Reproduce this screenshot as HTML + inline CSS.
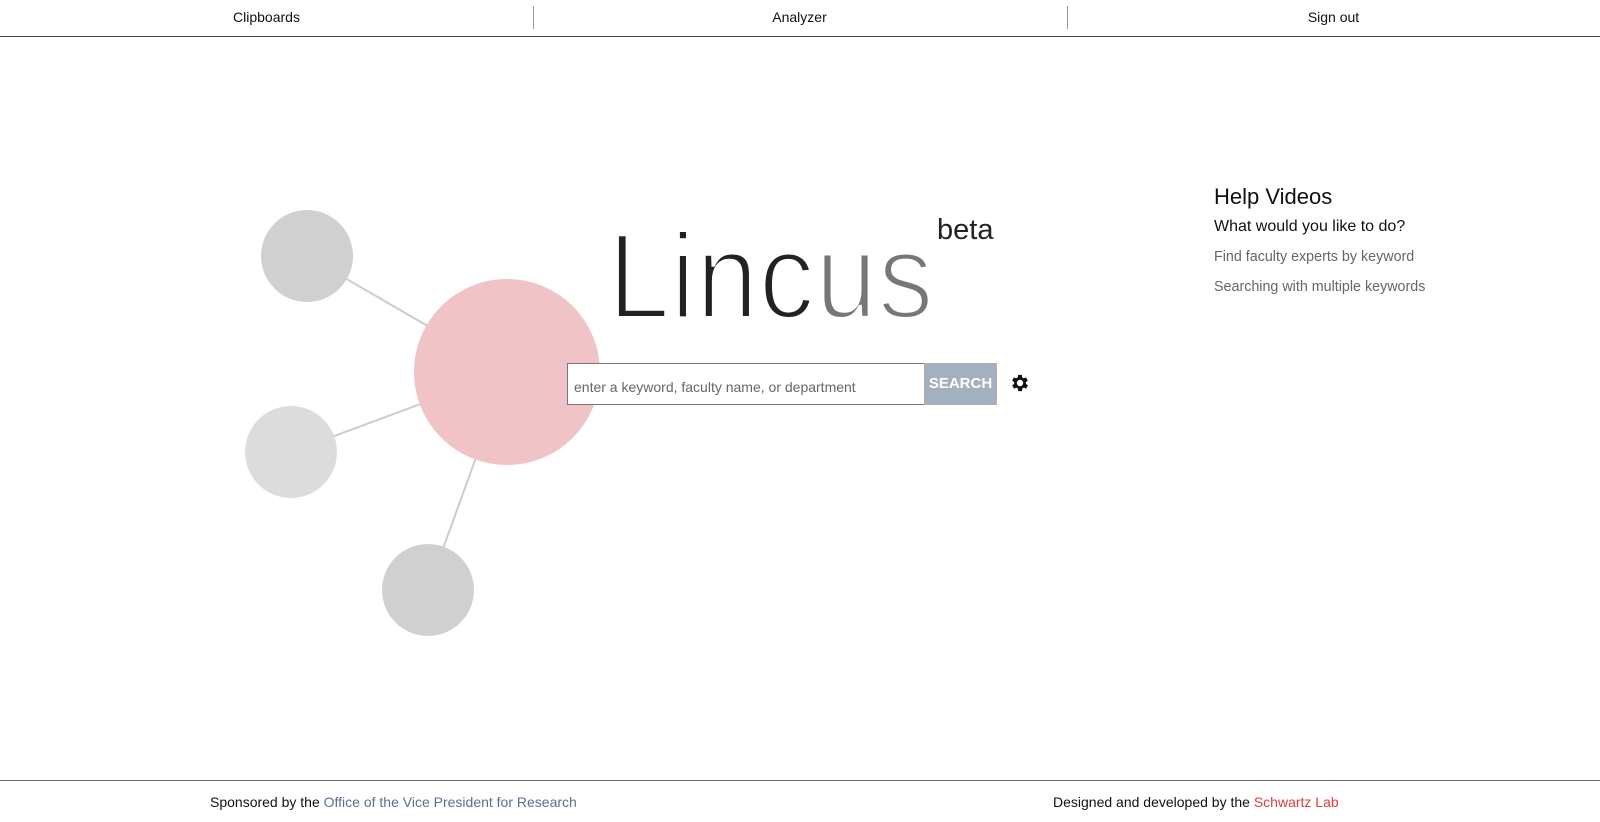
<!DOCTYPE html>
<html><head><style>
body{margin:0;width:1600px;height:821px;overflow:hidden;background:#fff;font-family:"Liberation Sans",sans-serif;position:relative}
.hd{position:absolute;left:0;top:0;width:1600px;height:36px;border-bottom:1px solid #444}
.hd div{position:absolute;top:9px;font-size:14px;color:#111;text-align:center;width:533px}
.sep{position:absolute;top:6px;width:1px;height:23px;background:#999}
.ft{position:absolute;left:0;top:780px;width:1600px;height:41px;border-top:1px solid #666}
.ft span{position:absolute;top:13px;font-size:14px;color:#111}
.t{position:absolute;white-space:nowrap}
.L span{-webkit-text-stroke:4px #fff}
</style></head><body>
<div class="hd">
<div style="left:0">Clipboards</div>
<div style="left:533px">Analyzer</div>
<div style="left:1067px">Sign out</div>
</div>
<div class="sep" style="left:533px"></div>
<div class="sep" style="left:1067px"></div>
<svg style="position:absolute;left:0;top:0" width="1600" height="780">
<line x1="507" y1="372" x2="307" y2="256" stroke="#ccc" stroke-width="2"/>
<line x1="507" y1="372" x2="291" y2="452" stroke="#ccc" stroke-width="2"/>
<line x1="507" y1="372" x2="428" y2="590" stroke="#ccc" stroke-width="2"/>
<circle cx="307" cy="256" r="46" fill="#d0d0d0"/>
<circle cx="291" cy="452" r="46" fill="#dcdcdc"/>
<circle cx="428" cy="590" r="46" fill="#d0d0d0"/>
<circle cx="507" cy="372" r="93" fill="#f0c4c6"/>
</svg>
<div class="t L" style="left:608px;top:206px;font-size:122px;color:#222;letter-spacing:1px;transform:scaleX(0.91);transform-origin:0 0"><span>L</span><span>i</span><span>n</span><span>c</span><span style="color:#777">u</span><span style="color:#777">s</span></div>
<div class="t" style="left:937px;top:214px;font-size:29px;color:#222">beta</div>
<div style="position:absolute;left:567px;top:363px;width:356px;height:40px;border:1px solid #777;background:#fff"></div>
<div class="t" style="left:574px;top:379px;font-size:14px;color:#666">enter a keyword, faculty name, or department</div>
<div style="position:absolute;left:924px;top:363px;width:73px;height:42px;background:#a3b0bd;color:#fff;font-weight:bold;font-size:15px;line-height:42px;text-align:center">SEARCH</div>
<svg style="position:absolute;left:1009px;top:372px" width="22" height="22" viewBox="0 0 24 24"><path fill="#111" d="M19.4 13a7.5 7.5 0 000-2l2.1-1.6-2-3.5-2.5 1a7.6 7.6 0 00-1.7-1L15 3.200h-4l-.4 2.7a7.6 7.6 0 00-1.7 1l-2.5-1-2 3.5L6.6 11a7.5 7.5 0 000 2l-2.1 1.6 2 3.5 2.5-1c.5.4 1.1.7 1.7 1l.4 2.7h4l.4-2.7c.6-.3 1.2-.6 1.7-1l2.5 1 2-3.5zM13 15.5a3.5 3.5 0 110-7 3.5 3.5 0 010 7z" transform="translate(-1 0)"/></svg>
<div class="t" style="left:1214px;top:184px;font-size:22px;color:#111">Help Videos</div>
<div class="t" style="left:1214px;top:218px;font-size:16px;color:#111">What would you like to do?</div>
<div class="t" style="left:1214px;top:249px;font-size:14.3px;color:#666">Find faculty experts by keyword</div>
<div class="t" style="left:1214px;top:279px;font-size:14.3px;color:#666">Searching with multiple keywords</div>
<div class="ft">
<span style="left:210px">Sponsored by the <span style="position:static;color:#5a7090">Office of the Vice President for Research</span></span>
<span style="left:1053px">Designed and developed by the <span style="position:static;color:#d9423a">Schwartz Lab</span></span>
</div>
</body></html>
